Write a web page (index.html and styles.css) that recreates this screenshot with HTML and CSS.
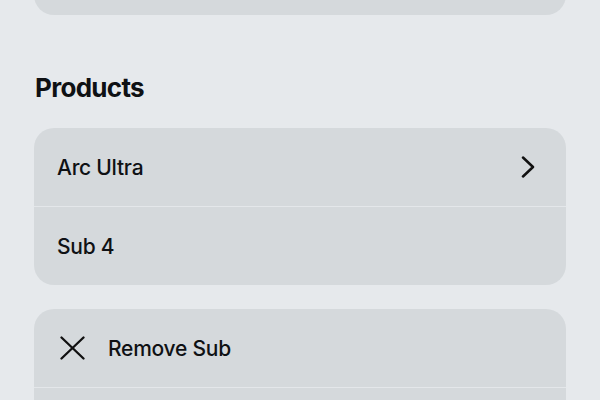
FILE: index.html
```html
<!DOCTYPE html>
<html lang="en">
<head>
<meta charset="utf-8">
<title>Products</title>
<link rel="stylesheet" href="styles.css">
</head>
<body>
<main class="page">
  <section class="card card-top">
    <div class="row"></div>
  </section>

  <h2 class="section-title">Products</h2>

  <section class="card">
    <div class="row">
      <span class="label">Arc Ultra</span>
      <svg class="chevron" width="14" height="22" viewBox="0 0 14 22" aria-hidden="true">
        <polyline points="2,1.5 12,11 2,20.5" fill="none" stroke="#111" stroke-width="2.5" stroke-linecap="round" stroke-linejoin="round"/>
      </svg>
    </div>
    <div class="sep"></div>
    <div class="row">
      <span class="label">Sub 4</span>
    </div>
  </section>

  <section class="card card-actions">
    <div class="row">
      <svg class="x-icon" width="32" height="24" viewBox="0 0 32 24" aria-hidden="true">
        <line x1="4.5" y1="1.5" x2="26.5" y2="22.5" stroke="#111" stroke-width="2.3" stroke-linecap="round"/>
        <line x1="26.5" y1="1.5" x2="4.5" y2="22.5" stroke="#111" stroke-width="2.3" stroke-linecap="round"/>
      </svg>
      <span class="label">Remove Sub</span>
    </div>
    <div class="sep"></div>
    <div class="row"></div>
  </section>
</main>
</body>
</html>
```

FILE: styles.css
```css
html, body {
  margin: 0;
  padding: 0;
  overflow: hidden;
}

body {
  background: #e6e9ec;
  font-family: Inter, "Noto Sans", "Liberation Sans", sans-serif;
  color: #0f1114;
}

.page {
  display: flex;
  flex-direction: column;
  padding: 0 34px;
}

.card {
  background: #d5d9dc;
  border-radius: 20px;
  overflow: hidden;
}

.card-top {
  margin-top: -63px;
}

.section-title {
  margin: 57px 0 24px 1px;
  font-size: 26px;
  line-height: 32px;
  font-weight: 700;
  letter-spacing: -0.7px;
}

.card-actions {
  margin-top: 24px;
}

.row {
  height: 78px;
  display: flex;
  align-items: center;
  padding: 0 31px 0 23px;
}

.label {
  flex: 1;
  font-size: 21px;
  font-weight: 450;
  letter-spacing: -0.25px;
}

.sep {
  height: 1px;
  background: #e4e7ea;
}

.chevron {
  flex: none;
}

.x-icon {
  flex: none;
  margin-right: 19px;
}
```
